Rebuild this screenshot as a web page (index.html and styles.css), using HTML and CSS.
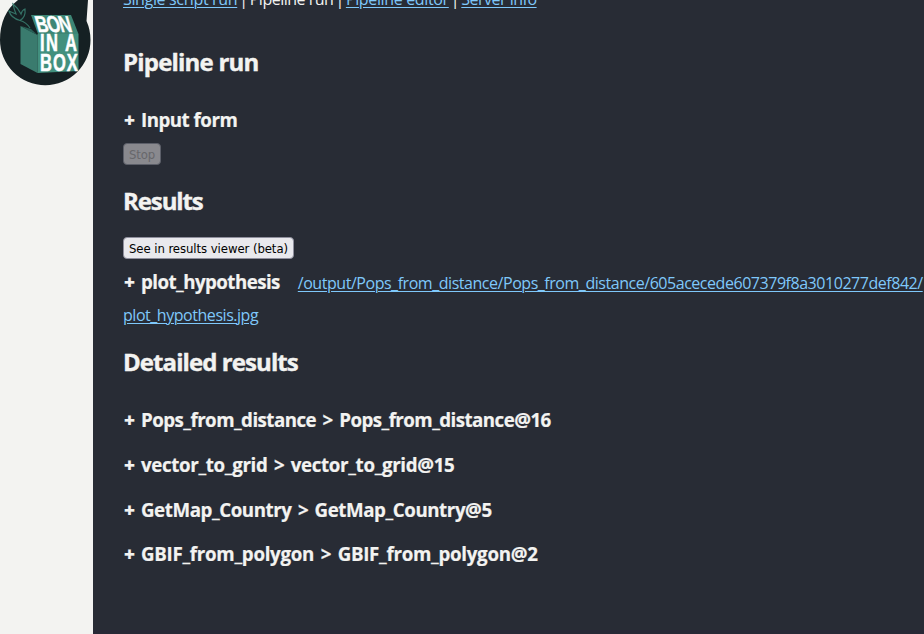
FILE: index.html
```html
<!DOCTYPE html>
<html lang="en">
<head>
<meta charset="utf-8">
<title>BON in a Box</title>
<link rel="stylesheet" href="styles.css">
</head>
<body>
<div class="app">
  <aside class="sidebar">
    <svg class="logo" viewBox="0 0 93 90" role="img" aria-label="BON in a Box">
      <path fill="#152023" d="M18 0H88L86.500 21Q90.500 30 90.500 40A45 45 0 0 1 0 40Q0 14 18 0Z"/>
      <path fill="#3a7b6e" d="M20.500 26 37.500 35V73L20.500 64Z"/>
      <path fill="#3d8675" d="M31 15H71L78.500 34H38Z"/>
      <path fill="#42907e" d="M37.500 34H78.500V71L37.500 73Z"/>
      <path fill="#285f56" d="M21 26 31 29 37 34.500 29 31Z"/>
      <path class="leaf" d="M30 28Q26 22 20 20.500Q11 18 9 11Q11 12 16 14Q14 9 13 4Q18 8 21 14Q22 10 25 9Q26 17 20 20.500"/>
      <g class="logo-text">
        <text transform="translate(38 32) skewX(16) scale(.72 1)" textLength="49" lengthAdjust="spacing">BON</text>
        <text transform="translate(40 51) scale(.72 1)" textLength="51.500" lengthAdjust="spacing">IN A</text>
        <text transform="translate(40 70.500) scale(.72 1)" textLength="52.500" lengthAdjust="spacing">BOX</text>
      </g>
    </svg>
  </aside>
  <main>
    <nav><a href="#">Single script run</a><i>|</i><span class="current">Pipeline run</span><i>|</i><a href="#">Pipeline editor</a><i>|</i><a class="info" href="#">Server info</a></nav>
    <h2 class="t1">Pipeline run</h2>
    <h3 class="form-title"><b>+</b><span>Input form</span></h3>
    <button class="stop" disabled>Stop</button>
    <h2 class="t2">Results</h2>
    <button class="viewer">See in results viewer (beta)</button>
    <div class="output"><h3><b>+</b><span class="r0">plot_hypothesis</span></h3><a href="#">/output/Pops_from_distance/Pops_from_distance/605acecede607379f8a3010277def842/<wbr>plot_hypothesis.jpg</a></div>
    <h2 class="t3">Detailed results</h2>
    <section class="details">
      <h3><b>+</b><span class="r1">Pops_from_distance &gt; Pops_from_distance@16</span></h3>
      <h3><b>+</b><span class="r2">vector_to_grid &gt; vector_to_grid@15</span></h3>
      <h3><b>+</b><span class="r3">GetMap_Country &gt; GetMap_Country@5</span></h3>
      <h3><b>+</b><span class="r4">GBIF_from_polygon &gt; GBIF_from_polygon@2</span></h3>
    </section>
  </main>
</div>
</body>
</html>
```
FILE: styles.css
```css
* { box-sizing: border-box; }
body { margin: 0; background: #f3f3f1; }
.app { display: flex; height: 634px; overflow: hidden; }
.sidebar { width: 93px; flex: none; }
.logo { display: block; width: 93px; height: 90px; }
.leaf { fill: none; stroke: #347266; stroke-width: 1.2; }
.logo-text { fill: #fff; stroke: #fff; stroke-width: .5px; font: bold 23px "Liberation Sans", sans-serif; }
main {
  flex: 1; min-width: 0; padding-left: 30px;
  background: #282c35; color: #f3f3f1;
  border-bottom: 4px solid #282836;
  font: 16px/32px "Open Sans", "Noto Sans", sans-serif;
}
a { color: #7fc8fa; text-decoration-thickness: 1px; text-underline-offset: 2px; }
nav { display: flex; margin-top: -17px; height: 32px; white-space: nowrap; letter-spacing: -0.35px; }
nav i { width: 12.5px; text-align: center; font-style: normal; }
nav .current, nav .info { letter-spacing: -0.5px; }
h2 { margin: 0; font-size: 24px; line-height: 32px; letter-spacing: -0.8px; -webkit-text-stroke: 0.4px currentColor; }
h3 { margin: 0; font-size: 18.72px; line-height: 24px; letter-spacing: -0.5px; white-space: nowrap; -webkit-text-stroke: 0.2px currentColor; }
h3 b { display: inline-block; width: 17px; margin-left: 1px; }
h3 span { word-spacing: 2px; }
.t1 { margin-top: 31px; }
.form-title { margin-top: 30px; }
.form-title span { word-spacing: 0; }
button {
  display: block; height: 22px; padding: 1px 0 0; border: 1px solid #8f8f9d; border-radius: 4px;
  font: 13px/20px "DejaVu Sans Condensed", "DejaVu Sans", sans-serif; white-space: nowrap;
  background: #e9e9ed; color: #000;
}
.stop { width: 38px; margin-top: 11px; background: #89898e; border-color: #5c5f69; color: #67676b; letter-spacing: -0.2px; }
.t2 { margin-top: 20px; letter-spacing: -1.1px; }
.viewer { width: 171px; margin-top: 20px; letter-spacing: -0.07px; }
.output { height: 64px; margin-top: 8px; letter-spacing: -0.46px; white-space: nowrap; }
.output h3 { display: inline-block; margin-right: 18px; }
.r0 { letter-spacing: -0.55px; }
.t3 { margin-top: 15px; letter-spacing: -0.92px; }
.details { display: grid; gap: 20.6px; margin-top: 30.4px; }
.r1 { letter-spacing: -0.54px; word-spacing: 2.2px; }
.r2 { letter-spacing: -0.34px; }
.r3 { letter-spacing: -0.43px; }
.r4 { letter-spacing: -0.28px; }
```
